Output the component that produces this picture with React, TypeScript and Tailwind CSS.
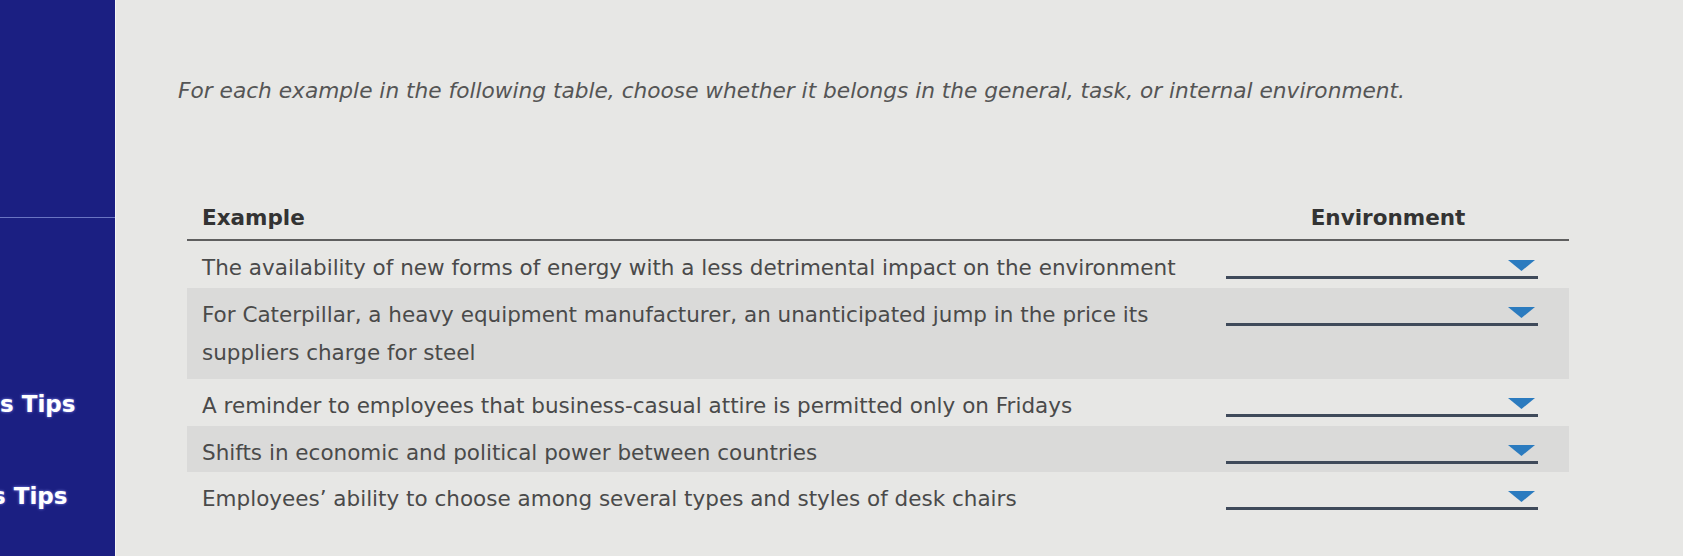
const rows = [
  { text: ["The availability of new forms of energy with a less detrimental impact on the environment"], h: "h-[47px]", shade: false },
  { text: ["For Caterpillar, a heavy equipment manufacturer, an unanticipated jump in the price its", "suppliers charge for steel"], h: "h-[91px]", shade: true },
  { text: ["A reminder to employees that business-casual attire is permitted only on Fridays"], h: "h-[47px]", shade: false },
  { text: ["Shifts in economic and political power between countries"], h: "h-[46px]", shade: true },
  { text: ["Employees’ ability to choose among several types and styles of desk chairs"], h: "h-[50px]", shade: false },
];

export default function App() {
  return (
    <div className="flex h-[556px] w-[1683px] overflow-hidden bg-[#e7e7e5] font-['DejaVu_Sans',sans-serif]">
      <Sidebar />
      <main className="flex-1 pl-[63px] pt-[77px]">
        <p className="whitespace-nowrap text-[21.7px] leading-[28px] italic text-[#555]">
          For each example in the following table, choose whether it belongs in the general, task, or internal environment.
        </p>
        <EnvTable />
      </main>
    </div>
  );
}

const Sidebar = () => (
  <aside className="flex w-[115px] shrink-0 flex-col overflow-hidden bg-[#1b1f82] shadow-[1px_0_0_#f4f4f4]">
    <div className="h-[218px] border-b border-[#6a74c2]" />
    <span className="mt-[172px] ml-0 whitespace-nowrap text-[23px] leading-[28px] font-bold text-white [text-shadow:0_0_3px_#8a8ff0]">
      s Tips
    </span>
    <span className="mt-[64px] -ml-[8px] whitespace-nowrap text-[23px] leading-[28px] font-bold text-white [text-shadow:0_0_3px_#8a8ff0]">
      s Tips
    </span>
  </aside>
);

const EnvTable = () => (
  <div className="mt-[91px] ml-[9px] w-[1382px]">
    <div className="flex h-[45px] items-center border-b-2 border-[#5f5f5f] pt-[2px] text-[21.5px] font-bold text-[#333]">
      <div className="flex-1 pl-[15px]">Example</div>
      <div className="mr-[31px] w-[312px] pl-[12px] text-center">Environment</div>
    </div>
    {rows.map((r, i) => (
      <div key={i} className={`flex items-start ${r.h} ${r.shade ? "bg-[#dadad9]" : ""}`}>
        <div className="flex-1 whitespace-nowrap pl-[15px] pt-[8px] text-[21.5px] leading-[38px] text-[#4a4a4a]">
          {r.text.map((t, j) => (
            <div key={j}>{t}</div>
          ))}
        </div>
        <Dropdown />
      </div>
    ))}
  </div>
);

const Dropdown = () => (
  <div className="mt-[12px] mr-[31px] flex h-[26px] w-[312px] shrink-0 items-end justify-end border-b-[3px] border-[#3f4a5a] pr-[3px] pb-[5px]">
    <svg width="27" height="11" viewBox="0 0 27 11">
      <polygon points="0,0 27,0 13.5,11" fill="#2b7bbf" />
    </svg>
  </div>
);
